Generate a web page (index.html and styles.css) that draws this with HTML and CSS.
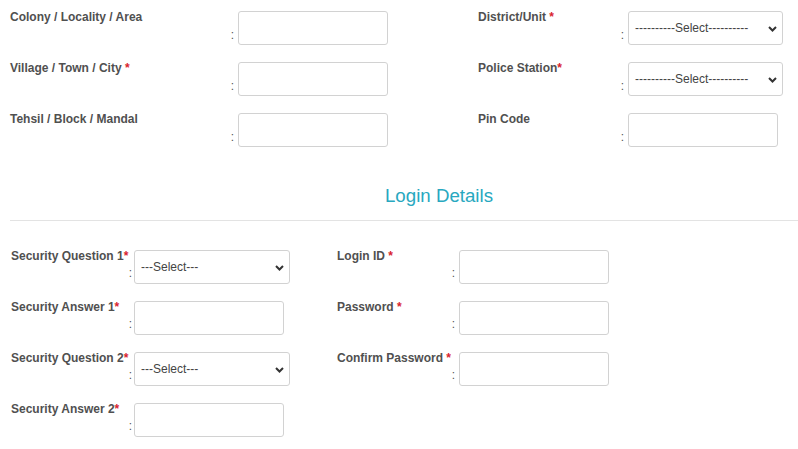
FILE: index.html
```html
<!DOCTYPE html>
<html lang="en">
<head>
<meta charset="utf-8">
<title>Registration</title>
<link rel="stylesheet" href="styles.css">
</head>
<body>
<div class="page">
  <section class="addr">
    <div class="col">
      <div class="field">
        <label class="lbl">Colony / Locality / Area</label>
        <span class="colon">:</span>
        <input class="ctl" type="text">
      </div>
      <div class="field">
        <label class="lbl">Village / Town / City <span class="req">*</span></label>
        <span class="colon">:</span>
        <input class="ctl" type="text">
      </div>
      <div class="field">
        <label class="lbl">Tehsil / Block / Mandal</label>
        <span class="colon">:</span>
        <input class="ctl" type="text">
      </div>
    </div>
    <div class="col col-right">
      <div class="field">
        <label class="lbl">District/Unit <span class="req">*</span></label>
        <span class="colon">:</span>
        <span class="sel-wrap sel-wide">
          <select class="ctl sel"><option>----------Select----------</option></select>
          <svg class="chev" width="9" height="6" viewBox="0 0 9 6"><path d="M1 1l3.5 3.5L8 1" fill="none" stroke="#333" stroke-width="2"/></svg>
        </span>
      </div>
      <div class="field">
        <label class="lbl">Police Station<span class="req">*</span></label>
        <span class="colon">:</span>
        <span class="sel-wrap sel-wide">
          <select class="ctl sel"><option>----------Select----------</option></select>
          <svg class="chev" width="9" height="6" viewBox="0 0 9 6"><path d="M1 1l3.5 3.5L8 1" fill="none" stroke="#333" stroke-width="2"/></svg>
        </span>
      </div>
      <div class="field">
        <label class="lbl">Pin Code</label>
        <span class="colon">:</span>
        <input class="ctl" type="text">
      </div>
    </div>
  </section>

  <h3 class="section-title">Login Details</h3>
  <hr class="rule">

  <section class="login">
    <div class="col">
      <div class="field">
        <label class="lbl">Security Question 1<span class="req">*</span></label>
        <span class="colon">:</span>
        <span class="sel-wrap sel-q">
          <select class="ctl sel"><option>---Select---</option></select>
          <svg class="chev" width="9" height="6" viewBox="0 0 9 6"><path d="M1 1l3.5 3.5L8 1" fill="none" stroke="#333" stroke-width="2"/></svg>
        </span>
      </div>
      <div class="field">
        <label class="lbl">Security Answer 1<span class="req">*</span></label>
        <span class="colon">:</span>
        <input class="ctl" type="text">
      </div>
      <div class="field">
        <label class="lbl">Security Question 2<span class="req">*</span></label>
        <span class="colon">:</span>
        <span class="sel-wrap sel-q">
          <select class="ctl sel"><option>---Select---</option></select>
          <svg class="chev" width="9" height="6" viewBox="0 0 9 6"><path d="M1 1l3.5 3.5L8 1" fill="none" stroke="#333" stroke-width="2"/></svg>
        </span>
      </div>
      <div class="field">
        <label class="lbl">Security Answer 2<span class="req">*</span></label>
        <span class="colon">:</span>
        <input class="ctl" type="text">
      </div>
    </div>
    <div class="col col-right">
      <div class="field">
        <label class="lbl">Login ID <span class="req">*</span></label>
        <span class="colon">:</span>
        <input class="ctl" type="text">
      </div>
      <div class="field">
        <label class="lbl">Password <span class="req">*</span></label>
        <span class="colon">:</span>
        <input class="ctl" type="password">
      </div>
      <div class="field">
        <label class="lbl">Confirm Password <span class="req">*</span></label>
        <span class="colon">:</span>
        <input class="ctl" type="password">
      </div>
    </div>
  </section>
</div>
</body>
</html>
```

FILE: styles.css
```css
* { box-sizing: border-box; }

body {
  margin: 0;
  background: #fff;
  font-family: "Liberation Sans", Arial, Helvetica, sans-serif;
  color: #555;
}

.page {
  width: 798px;
}

.col {
  display: flex;
  flex-direction: column;
  gap: 16px;
}

.field {
  display: flex;
  align-items: flex-start;
}

.lbl {
  font-size: 12px;
  line-height: 14px;
  font-weight: bold;
  color: #505050;
  white-space: nowrap;
}

.req {
  color: #d9232e;
}

.colon {
  align-self: flex-end;
  font-size: 12px;
  line-height: 14px;
  color: #555;
  text-align: right;
  padding-bottom: 3px;
}

.ctl {
  display: block;
  margin: 1px 0 0 0;
  width: 150px;
  height: 34px;
  border: 1px solid #d2d2d2;
  border-radius: 3px;
  background: #fff;
  font-family: "Liberation Sans", Arial, Helvetica, sans-serif;
  font-size: 12px;
  color: #444;
  outline: none;
}

.sel-wrap {
  position: relative;
  display: block;
}

.sel {
  -webkit-appearance: none;
  appearance: none;
  padding: 0 20px 0 6px;
}

.sel-wide .sel { width: 155px; }
.sel-q .sel { width: 156px; padding-left: 6px; }

.chev {
  position: absolute;
  right: 6px;
  top: 16px;
  pointer-events: none;
}

/* address block */
.addr {
  display: grid;
  grid-template-columns: 468px 1fr;
  padding: 10px 0 0 10px;
}

.addr .lbl { width: 218px; }
.addr .colon { width: 10px; padding-right: 4px; }
.addr .col-right .lbl { width: 140px; }

/* heading */
.section-title {
  margin: 38px 0 13px 0;
  padding-left: 80px;
  text-align: center;
  font-size: 18.7px;
  line-height: 22px;
  font-weight: normal;
  color: #28a8c0;
}

.rule {
  margin: 0 0 0 10px;
  border: 0;
  border-top: 1px solid #e3e3e3;
  height: 0;
}

/* login block */
.login {
  display: grid;
  grid-template-columns: 326px 1fr;
  padding: 28px 0 0 11px;
}

.login .lbl { width: 116px; }
.login .colon { width: 7px; padding-right: 2px; padding-bottom: 4px; }
.login .col-right .lbl { width: 114px; }
.login .col-right .colon { width: 8px; padding-right: 4px; }
```
